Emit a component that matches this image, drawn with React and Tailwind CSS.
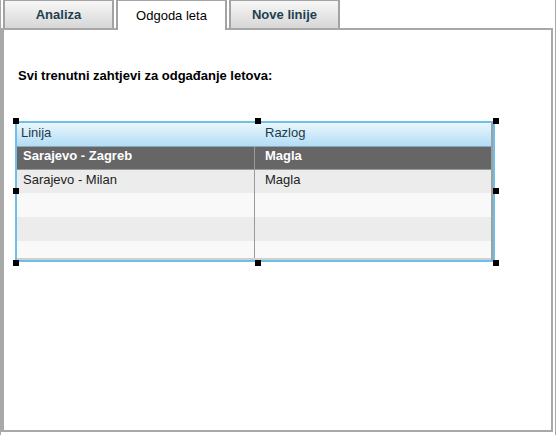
import React from "react";

const tabs = [
  { label: "Analiza", active: false },
  { label: "Odgoda leta", active: true },
  { label: "Nove linije", active: false },
];

const rows = [
  { linija: "Sarajevo - Zagreb", razlog: "Magla", selected: true, h: "h-[23px]" },
  { linija: "Sarajevo - Milan", razlog: "Magla", h: "h-[23px]" },
  { linija: "", razlog: "", h: "h-[24px]" },
  { linija: "", razlog: "", h: "h-[24px]" },
  { linija: "", razlog: "", h: "h-[17px]" },
];

function Handle({ className }) {
  return <div className={"absolute w-[6px] h-[6px] bg-black " + className} />;
}

export default function App() {
  return (
    <div className="w-[556px] h-[435px] bg-white font-['Liberation_Sans',Arial,sans-serif] overflow-hidden border-l border-r border-[#a8a8a8]">
      <div className="flex h-[28px] pl-[2px]">
        {tabs.map((t) => (
          <div
            key={t.label}
            className={
              "w-[111px] mr-[2px] flex items-center justify-center text-[13px] border-l-2 border-r-2 border-t border-[#a3a3a3] " +
              (t.active
                ? "bg-white text-black h-[30px] relative z-10"
                : "h-[28px] bg-gradient-to-b from-[#f7f7f7] to-[#d7d7d7] text-[#1f3f4f] font-bold")
            }
          >
            {t.label}
          </div>
        ))}
      </div>
      <div className="mr-[2px] h-[404px] border-t-2 border-l-[3px] border-r-2 border-b-2 border-[#a8a8a8] bg-white">
        <div className="pt-[36px] pl-[14px] text-[13px] font-bold text-black">
          Svi trenutni zahtjevi za odgađanje letova:
        </div>
        <div className="relative ml-[11px] mt-[35px] w-[480px]">
          <div className="border-2 border-[#6bbfe8]">
            <div className="border-r-2 border-[#a0a0a0]">
              <div className="flex h-[24px] bg-gradient-to-b from-[#eaf6fd] to-[#b2ddf5] border-b border-[#8aa8ba] text-[13px] text-[#1b3a4b]">
                <div className="w-[238px] px-[4px] pb-[3px] flex items-center">Linija</div>
                <div className="flex-1 px-[10px] pb-[3px] flex items-center">Razlog</div>
              </div>
              {rows.map((r, i) => (
                <div
                  key={i}
                  className={
                    "flex text-[13px] " +
                    r.h +
                    " " +
                    (r.selected
                      ? "bg-[#666666] text-white font-bold border-b border-[#999]"
                      : i % 2 === 1
                      ? "bg-[#ececec] text-[#222]"
                      : "bg-[#f9f9f9] text-[#222]")
                  }
                >
                  <div className="w-[238px] px-[6px] pb-[3px] flex items-center border-r border-[#9a9a9a]">{r.linija}</div>
                  <div className="flex-1 px-[10px] pb-[3px] flex items-center">{r.razlog}</div>
                </div>
              ))}
              <div className="h-[2px] bg-[#cfcfcf]" />
            </div>
          </div>
          <Handle className="left-[-2px] top-[-3px]" />
          <Handle className="left-[240px] top-[-3px]" />
          <Handle className="right-[-4px] top-[-3px]" />
          <Handle className="left-[-2px] top-[67px]" />
          <Handle className="right-[-4px] top-[67px]" />
          <Handle className="left-[-2px] bottom-[-4px]" />
          <Handle className="left-[240px] bottom-[-4px]" />
          <Handle className="right-[-4px] bottom-[-4px]" />
        </div>
      </div>
    </div>
  );
}
